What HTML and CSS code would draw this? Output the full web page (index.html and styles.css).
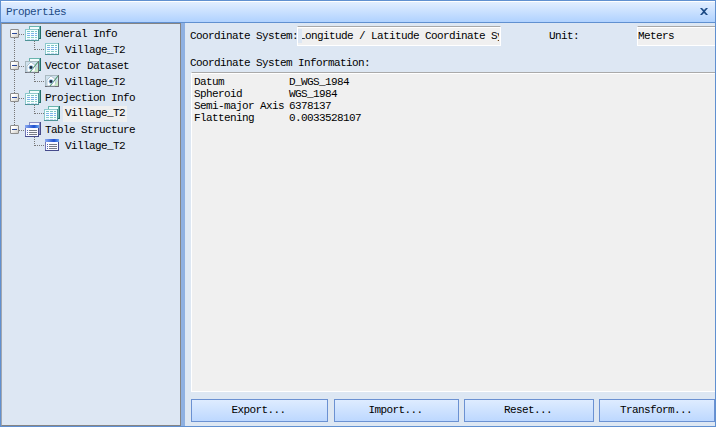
FILE: index.html
```html
<!DOCTYPE html>
<html lang="en">
<head>
<meta charset="utf-8">
<title>Properties</title>
<link rel="stylesheet" href="styles.css">
</head>
<body>
<svg class="defs" width="0" height="0">
  <defs>
    <linearGradient id="box" x1="0" y1="0" x2="1" y2="1"><stop offset=".3" stop-color="#fff"/><stop offset="1" stop-color="#cbc8be"/></linearGradient>
    <linearGradient id="bar"><stop offset="0" stop-color="#8aaaf0"/><stop offset=".65" stop-color="#1f4fd0"/><stop offset="1" stop-color="#69a4f0"/></linearGradient>
    <symbol id="plain" viewBox="0 0 14 12">
      <path fill="#8cc8cc" d="M0 0h14v12H0z"/><path fill="#4f9498" d="M13 0h1v12H0v-1h13z"/><path fill="#f5ffff" d="M1 1h12v10H1z"/>
      <path fill="#7cc4c4" d="M2 2h3v1H2zM6 2h3v1H6zM10 2h2v1h-2z"/>
      <path fill="#7db2ea" d="M2 4h3v1H2zM6 4h3v1H6zM10 4h2v1h-2zM2 6h3v1H2zM6 6h3v1H6zM10 6h2v1h-2z"/>
      <path fill="#8acdc4" d="M2 8h3v1H2zM6 8h3v1H6zM10 8h2v1h-2z"/><path fill="#c0d9f3" d="M2 10h3v1H2zM6 10h3v1H6zM10 10h2v1h-2z"/>
    </symbol>
    <symbol id="vector" viewBox="0 0 14 12">
      <path fill="#a9b9c0" d="M0 0h14v12H0z"/><path fill="#6d6c74" d="M13 0h1v12H0v-1h13z"/><path fill="#cfe2ee" d="M1 1h12v10H1z"/>
      <path shape-rendering="auto" fill="#fff" stroke="#9aafc0" stroke-width=".7" d="M2 11V5l4-4 5 4-1 6z"/>
      <path shape-rendering="auto" fill="#c8e8c4" d="M9 11l4-6v6z"/>
      <path shape-rendering="auto" fill="none" stroke="#4d956a" stroke-width="1.1" d="M13 1L9 6l-4 5"/>
      <circle shape-rendering="auto" cx="6" cy="6.5" r="2.3" fill="#8fb8e0"/>
      <circle shape-rendering="auto" cx="6" cy="6.5" r="1.4" fill="#1e2c3c"/>
    </symbol>
    <symbol id="table" viewBox="0 0 14 12">
      <path fill="#7177b5" d="M0 0h14v12H0z"/><path fill="#454b8c" d="M13 3h1v9H0v-1h13z"/><path fill="#fafaff" d="M1 3h12v8H1z"/><path fill="url(#bar)" d="M0 0h14v3H0z"/>
      <path fill="#5367b2" d="M2 5h1v1H2zM2 7h1v1H2zM2 9h1v1H2z"/><path fill="#777b86" d="M4 5h8v1H4zM4 7h8v1H4zM4 9h8v1H4z"/>
    </symbol>
    <symbol id="back" viewBox="0 0 16 15"><path fill="#69b4ae" d="M4 0h12v12H4z"/><path fill="#f1fdfd" d="M5 1h9v10H5z"/><path fill="#24706b" d="M15 0h1v13h-2v-1h1z"/></symbol>
    <symbol id="backp" viewBox="0 0 16 15"><path fill="#8a8fc4" d="M4 0h12v12H4z"/><path fill="#f4f4ff" d="M5 1h9v10H5z"/><path fill="#454b8c" d="M15 0h1v13h-2v-1h1z"/></symbol>
    <symbol id="plains" viewBox="0 0 16 15"><use href="#back" width="16" height="15"/><use href="#plain" y="3" width="14" height="12"/></symbol>
    <symbol id="vectors" viewBox="0 0 16 15"><use href="#back" width="16" height="15"/><use href="#vector" y="3" width="14" height="12"/></symbol>
    <symbol id="tables" viewBox="0 0 16 15"><use href="#backp" width="16" height="15"/><use href="#table" y="3" width="14" height="12"/></symbol>
    <symbol id="minus" viewBox="0 0 9 9"><rect x=".5" y=".5" width="8" height="8" rx=".4" fill="url(#box)" stroke="#8c8c8c"/><path fill="#294798" d="M2 4h5v1H2z"/></symbol>
  </defs>
</svg>
<div class="window">
  <header class="titlebar">
    <span>Properties</span>
    <svg class="close" width="8" height="7" viewBox="0 0 8 7"><path d="M0 0h2l2 2 2-2h2L5 3.5 8 7H6L4 5 2 7H0l3-3.5z" fill="#1c4a85"/></svg>
  </header>
  <div class="content">
    <nav class="tree">
      <div class="group">
        <div class="node"><svg class="toggle"><use href="#minus"/></svg><i class="dots"></i><svg class="icon big"><use href="#plains"/></svg><span>General Info</span></div>
        <div class="node child"><i class="elbow"></i><svg class="icon small"><use href="#plain"/></svg><span>Village_T2</span></div>
      </div>
      <div class="group">
        <div class="node"><svg class="toggle"><use href="#minus"/></svg><i class="dots"></i><svg class="icon big"><use href="#vectors"/></svg><span>Vector Dataset</span></div>
        <div class="node child"><i class="elbow"></i><svg class="icon small"><use href="#vector"/></svg><span>Village_T2</span></div>
      </div>
      <div class="group">
        <div class="node"><svg class="toggle"><use href="#minus"/></svg><i class="dots"></i><svg class="icon big"><use href="#plains"/></svg><span>Projection Info</span></div>
        <div class="node child"><i class="elbow"></i><svg class="icon big"><use href="#plains"/></svg><span class="selected">Village_T2</span></div>
      </div>
      <div class="group">
        <div class="node"><svg class="toggle"><use href="#minus"/></svg><i class="dots"></i><svg class="icon big"><use href="#tables"/></svg><span>Table Structure</span></div>
        <div class="node child"><i class="elbow"></i><svg class="icon small"><use href="#table"/></svg><span>Village_T2</span></div>
      </div>
    </nav>
    <main class="details">
      <div class="fields">
        <span class="label">Coordinate System:</span>
        <div class="field system"><div class="clip"><span class="shifted">Longitude / Latitude Coordinate Sy</span></div></div>
        <span class="label unit">Unit:</span>
        <div class="field meters">Meters</div>
      </div>
      <div class="caption">Coordinate System Information:</div>
      <div class="info">
        <dl>
          <dt>Datum</dt><dd>D_WGS_1984</dd>
          <dt>Spheroid</dt><dd>WGS_1984</dd>
          <dt>Semi-major Axis</dt><dd>6378137</dd>
          <dt>Flattening</dt><dd>0.0033528107</dd>
        </dl>
      </div>
      <div class="buttons">
        <button>Export...</button><button>Import...</button><button>Reset...</button><button>Transform...</button>
      </div>
    </main>
  </div>
</div>
</body>
</html>
```
FILE: styles.css
```css
* { box-sizing: border-box; }
body { margin: 0; overflow: hidden; }
body, button { font: 11px/12px "Liberation Mono", monospace; letter-spacing: -0.6px; color: #000; }
.defs { display: block; }
.window { width: 716px; height: 427px; border: 1px solid #6090d0; display: flex; flex-direction: column; background: #dde7f3; overflow: hidden; }
.titlebar { height: 22px; flex: none; border-top: 1px solid #fff; border-bottom: 1px solid #6090d0; background: linear-gradient(#e2eeff, #b0d2ff); color: #1c4a85; display: flex; align-items: center; justify-content: space-between; padding: 0 7px 1px 5px; }
.close { margin-bottom: 1px; }
.content { display: flex; height: 403px; }
.tree { width: 180px; border: 1px solid #848484; border-left-color: #a1a7b0; padding: 2px 0 0 8px; flex: none; }
.group { height: 32px; position: relative; }
.group:not(:last-child)::after { content: ""; position: absolute; left: 4px; top: 12px; height: 23px; border-left: 1px dotted #777; }
.node { height: 16px; display: flex; align-items: center; white-space: nowrap; }
.node span { margin: 0 0 1px -1px; }
.toggle { width: 9px; height: 9px; flex: none; z-index: 1; margin-bottom: 1px; }
.dots { width: 5px; border-top: 1px dotted #777; }
.icon { shape-rendering: crispEdges; flex: none; }
.big { width: 16px; height: 15px; margin: 0 5px 1px 1px; }
.small { width: 14px; height: 12px; margin: 0 7px 2px 1px; }
.elbow { width: 10px; height: 9px; margin: -9px 0 0 24px; border: dotted #777; border-width: 0 0 1px 1px; }
.child .big { margin: 0 4px 1px 0; }
.node .selected { background: #f0f0f0; width: 64px; height: 16px; padding: 1px 0 3px 2px; margin: 0 0 0 -1px; }
.details { width: 535px; flex: none; border-left: 4px solid #8eb0e1; padding: 3px 0 0 6px; }
.fields { height: 20px; display: flex; align-items: center; white-space: nowrap; }
.label { width: 106px; flex: none; text-indent: -1px; }
.field { height: 20px; background: #f0f0f0; border: 2px solid #fff; border-top-color: #a8a8a8; border-width: 1px 1px 1px 1px; box-shadow: inset 0 1px #fff; flex: none; overflow: hidden; }
.system { width: 204px; padding: 2px 1px 2px 0; }
.clip { height: 14px; overflow: hidden; border-left: 4px solid #dde7f3; line-height: 14px; }
.shifted { margin-left: -3px; }
.unit { width: 88px; margin-left: 48px; text-indent: 0; }
.meters { width: 90px; padding: 3px 0 1px; }
.caption { margin-top: 11px; height: 15px; text-indent: -1px; }
.info { height: 320px; border: 1px solid #fff; border-top: 1px solid #aaa; border-bottom: 1px solid #fff; background: #f0f0f0; padding: 3px 2px; box-shadow: inset 0 1px #fff; }
.info dl { margin: 0; display: grid; grid-template-columns: 96px 1fr; grid-auto-rows: 12px; white-space: nowrap; }
.info dt, .info dd { margin: 0; }
.info dd { text-indent: -1px; }
.buttons { margin-top: 7px; display: grid; grid-template-columns: 143px 130px 135px 116px; height: 23px; }
button { border: 1px solid #6b91d2; border-radius: 0; padding: 0 2px 2px 0; margin: 0 6px 0 0; background: linear-gradient(#deecff, #bdd8ff); }
button:nth-child(2), button:nth-child(3) { margin-right: 5px; }
button:last-child { margin-right: 0; }
```
